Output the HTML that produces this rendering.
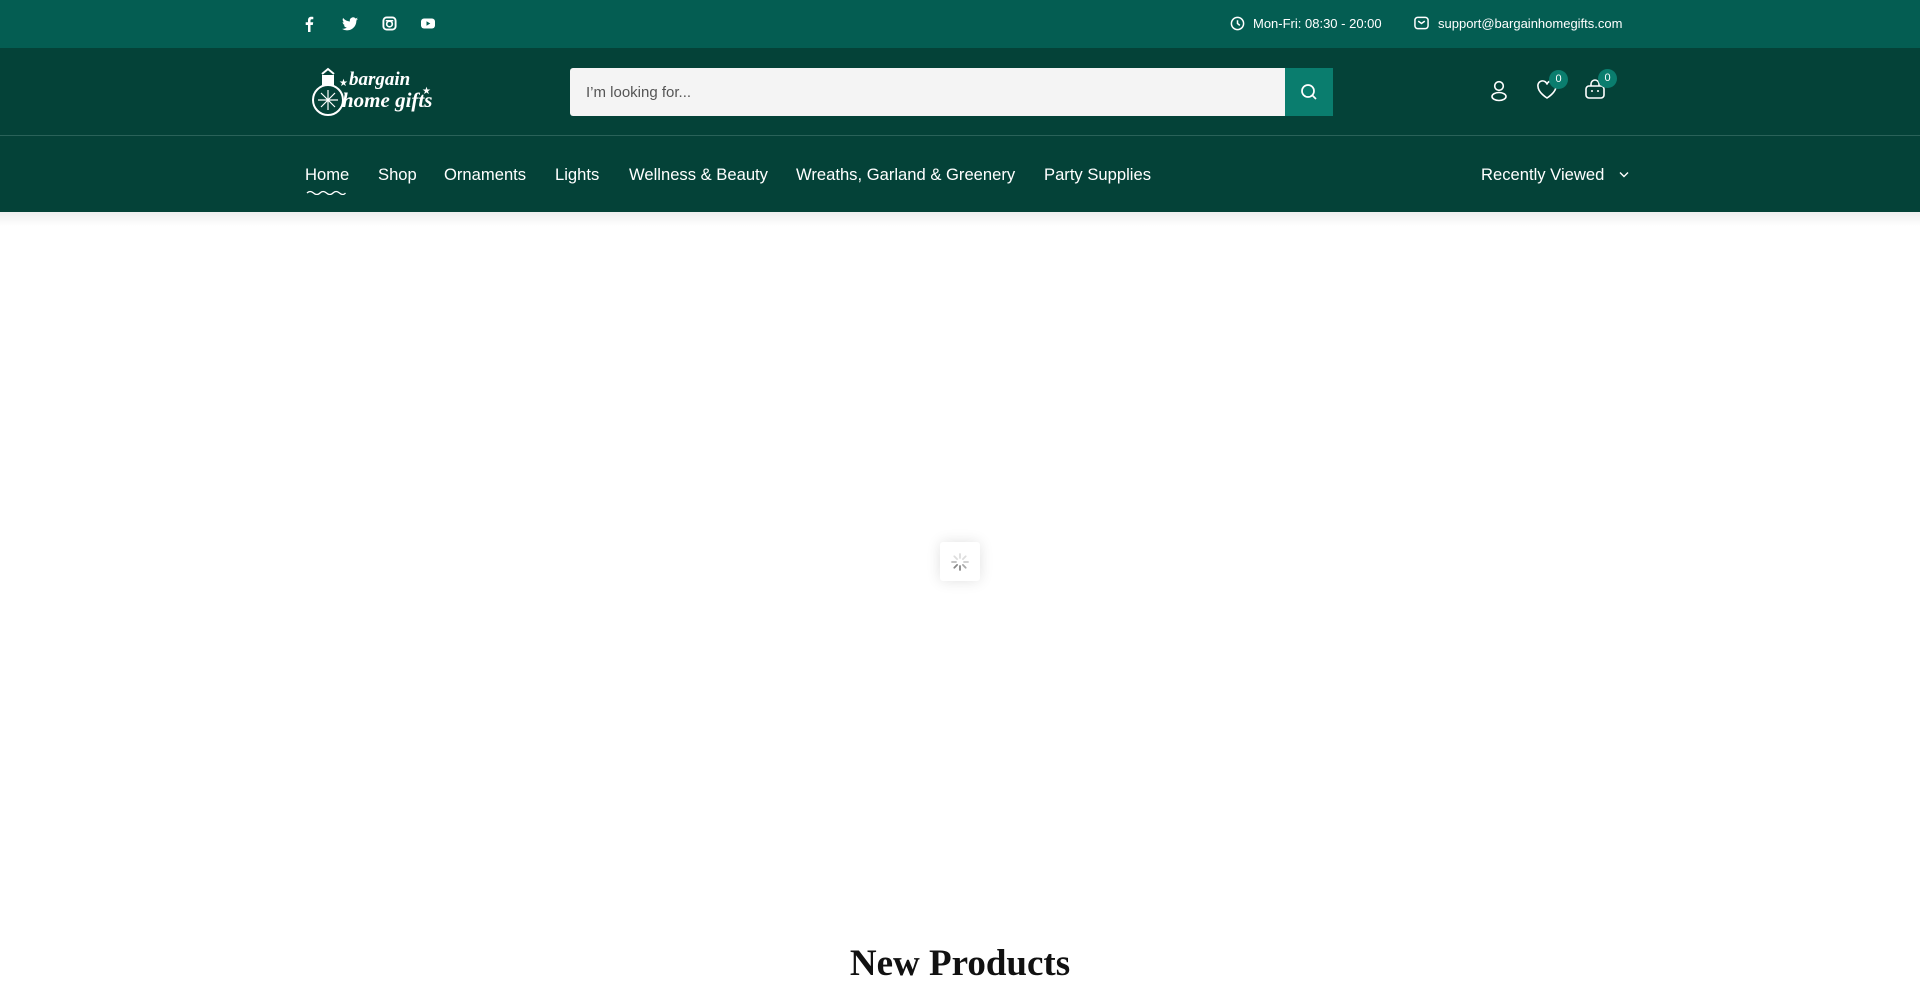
<!DOCTYPE html>
<html><head><meta charset="utf-8"><style>
*{margin:0;padding:0;box-sizing:border-box}
body{width:1920px;height:993px;overflow:hidden;background:#fff;font-family:"Liberation Sans",sans-serif;position:relative}
.top{position:absolute;left:0;top:0;width:1920px;height:48px;background:#045d52;color:#fff;font-size:13px}
.hdr{position:absolute;left:0;top:48px;width:1920px;height:164px;background:#044238}
.line{position:absolute;left:0;top:87px;width:1920px;height:1px;background:#2a6259}
.abs{position:absolute}
.nav{position:absolute;font-size:16.6px;color:#fff;white-space:nowrap}
.badge{position:absolute;width:19px;height:19px;border-radius:50%;background:#0a7d6e;color:#fff;font-size:11px;text-align:center;line-height:19px}
</style></head><body>
<div class="top">
<svg class="abs" style="left:303px;top:16px" width="12" height="16" viewBox="0 0 12 16"><path d="M7.5 16V9h2.3l.4-2.7H7.5V4.6c0-.8.3-1.3 1.4-1.3h1.4V.9C10 .8 9.2.7 8.3.7 6.3.7 5 1.9 5 4.1v2.2H2.7V9H5v7z" fill="#fff"/></svg>
<svg class="abs" style="left:342px;top:17px" width="16" height="14" viewBox="0 0 24 20"><path d="M24 2.4c-.9.4-1.8.7-2.8.8 1-.6 1.8-1.6 2.200-2.700-1 .6-2 1-3.100 1.200A4.900 4.900 0 0 0 11.900 6.200 14 14 0 0 1 1.700 1 4.900 4.900 0 0 0 3.200 7.600c-.8 0-1.600-.3-2.200-.6 0 2.400 1.700 4.400 3.900 4.800-.7.2-1.500.2-2.200.1.6 2 2.400 3.400 4.600 3.400A9.900 9.900 0 0 1 0 17.300 14 14 0 0 0 7.500 19.500c9.100 0 14-7.500 14-14v-.6c1-.7 1.800-1.600 2.500-2.500z" fill="#fff"/></svg>
<svg class="abs" style="left:382px;top:16px" width="15" height="15" viewBox="0 0 16 16"><rect x="1.5" y="1.5" width="13" height="13" rx="3.5" fill="none" stroke="#fff" stroke-width="2"/><circle cx="8" cy="8.5" r="3" fill="none" stroke="#fff" stroke-width="1.8"/><path d="M4 5h8" stroke="#fff" stroke-width="1.5"/></svg>
<svg class="abs" style="left:421px;top:18px" width="14" height="11" viewBox="0 0 14 11"><rect x="0" y="0.5" width="14" height="10" rx="3" fill="#fff"/><path d="M5.5 3.2v4.6L9.3 5.5z" fill="#045d52"/></svg>
<svg class="abs" style="left:1230px;top:16px" width="15" height="15" viewBox="0 0 16 16"><circle cx="8" cy="8" r="6.5" fill="none" stroke="#fff" stroke-width="1.6"/><path d="M8 4.5V8l2.5 2" fill="none" stroke="#fff" stroke-width="1.6"/></svg>
<div class="abs" style="left:1253px;top:16px">Mon-Fri: 08:30 - 20:00</div>
<svg class="abs" style="left:1414px;top:16px" width="15" height="14" viewBox="0 0 16 14"><rect x="1" y="1" width="14" height="12" rx="3" fill="none" stroke="#fff" stroke-width="1.6"/><path d="M4.5 5l3.5 2.5L11.5 5" fill="none" stroke="#fff" stroke-width="1.6"/></svg>
<div class="abs" style="left:1438px;top:16px">support@bargainhomegifts.com</div>
</div>
<div class="hdr">
<div class="line"></div>
<svg class="abs" style="left:308px;top:18px" width="132" height="54" viewBox="0 0 132 54">
<circle cx="20" cy="34" r="15" fill="none" stroke="#fff" stroke-width="2"/>
<path d="M20 24v20M10 34h20M13 27l14 14M27 27L13 41" stroke="#fff" stroke-width="1.2"/>
<rect x="14" y="9" width="12" height="10" fill="#fff"/><path d="M14 8l6-5 6 5" stroke="#fff" stroke-width="2" fill="none"/>
<text x="41" y="19" font-family="Liberation Serif,serif" font-style="italic" font-weight="bold" font-size="19" fill="#fff">bargain</text>
<text x="34" y="41" font-family="Liberation Serif,serif" font-style="italic" font-weight="bold" font-size="21" fill="#fff">home gifts</text>
<text x="31" y="20" font-size="10" fill="#fff">★</text><text x="114" y="28" font-size="10" fill="#fff">★</text>
</svg>
<div class="abs" style="left:570px;top:20px;width:715px;height:48px;background:#f4f4f4;border-radius:3px 0 0 3px;font-size:15px;color:#555;padding:16px 0 0 16px">I’m looking for...</div>
<div class="abs" style="left:1285px;top:20px;width:48px;height:48px;background:#0a7d6e"><svg style="margin:15px" width="18" height="18" viewBox="0 0 18 18"><circle cx="8" cy="8" r="6" fill="none" stroke="#fff" stroke-width="1.7"/><path d="M12.5 12.5l3.5 3.5" stroke="#fff" stroke-width="1.7"/></svg></div>
<svg class="abs" style="left:1489px;top:32px" width="20" height="22" viewBox="0 0 20 22"><circle cx="10" cy="6" r="4.3" fill="none" stroke="#fff" stroke-width="1.6"/><ellipse cx="10" cy="16.5" rx="7" ry="4" fill="none" stroke="#fff" stroke-width="1.6"/></svg>
<svg class="abs" style="left:1536px;top:32px" width="22" height="20" viewBox="0 0 22 20"><path d="M11 18S2 12.5 2 6.5A4.5 4.5 0 0 1 11 4.5a4.5 4.5 0 0 1 9 2C20 12.5 11 18 11 18z" fill="none" stroke="#fff" stroke-width="1.6"/></svg>
<div class="badge" style="left:1549px;top:22px">0</div>
<svg class="abs" style="left:1584px;top:30px" width="22" height="22" viewBox="0 0 22 22"><rect x="2" y="8" width="18" height="12" rx="3" fill="none" stroke="#fff" stroke-width="1.6"/><path d="M7 8V6a4 4 0 0 1 8 0v2" fill="none" stroke="#fff" stroke-width="1.6"/><circle cx="8" cy="13" r="1" fill="#fff"/><circle cx="14" cy="13" r="1" fill="#fff"/></svg>
<div class="badge" style="left:1598px;top:21px">0</div>
<div class="nav" style="left:305px;top:117px">Home</div>
<svg class="abs" style="left:306px;top:141px" width="40" height="6" viewBox="0 0 40 6"><path d="M1 4q3-3 6.5 0t6.5 0 6.5 0 6.5 0 6.5 0 6 0" fill="none" stroke="#fff" stroke-width="1.3"/></svg>
<div class="nav" style="left:378px;top:117px">Shop</div>
<div class="nav" style="left:444px;top:117px">Ornaments</div>
<div class="nav" style="left:555px;top:117px">Lights</div>
<div class="nav" style="left:629px;top:117px">Wellness &amp; Beauty</div>
<div class="nav" style="left:796px;top:117px">Wreaths, Garland &amp; Greenery</div>
<div class="nav" style="left:1044px;top:117px">Party Supplies</div>
<div class="nav" style="left:1481px;top:117px">Recently Viewed</div>
<svg class="abs" style="left:1619px;top:123px" width="10" height="7" viewBox="0 0 10 7"><path d="M1 1.5l4 4 4-4" fill="none" stroke="#fff" stroke-width="1.4"/></svg>
</div>
<div class="abs" style="left:0;top:212px;width:1920px;height:14px;background:linear-gradient(#eee,#fff)"></div>
<div class="abs" style="left:940px;top:542px;width:40px;height:39px;background:#fff;border-radius:3px;box-shadow:0 0 14px rgba(0,0,0,.12)">
<svg style="margin:10px" width="20" height="20" viewBox="0 0 20 20" stroke-width="1.8" stroke-linecap="round"><path d="M10 2v4" stroke="#ddd"/><path d="M15.7 4.3l-2.8 2.8" stroke="#ddd"/><path d="M18 10h-4" stroke="#ccc"/><path d="M15.7 15.7l-2.8-2.8" stroke="#aaa"/><path d="M10 18v-4" stroke="#888"/><path d="M4.3 15.7l2.8-2.8" stroke="#888"/><path d="M2 10h4" stroke="#bbb"/><path d="M4.3 4.3l2.8 2.8" stroke="#ddd"/></svg></div>
<div class="abs" style="left:0;top:942px;width:1920px;text-align:center;font-family:'Liberation Serif',serif;font-weight:bold;font-size:37px;color:#111">New Products</div>
</body></html>
